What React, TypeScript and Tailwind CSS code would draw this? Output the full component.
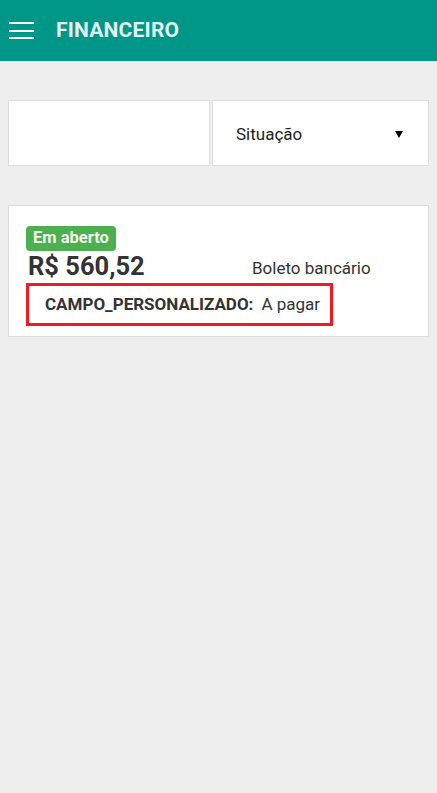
import React from "react";

export default function App() {
  return (
    <div className="min-h-[793px] w-full bg-[#eeeeee]" style={{ fontFamily: "Roboto, 'Noto Sans', sans-serif" }}>
      <header className="flex h-[61px] items-center bg-[#009688]">
        <div className="ml-[9px] flex h-[17px] w-[25px] flex-col justify-between">
          <span className="block h-[2px] w-full bg-white" />
          <span className="block h-[2px] w-full bg-white" />
          <span className="block h-[2px] w-full bg-white" />
        </div>
        <h1 className="ml-[22px] text-[21px] font-bold leading-none tracking-[0.2px] text-[#e0f2f1]">FINANCEIRO</h1>
      </header>

      <div className="mx-2 mt-[39px] flex gap-[2px]">
        <div className="h-[66px] w-[202px] border border-[#dddddd] bg-white" />
        <div className="flex h-[66px] flex-1 items-center justify-between border border-[#dddddd] bg-white pl-[23px] pr-[25px] pt-[3px]">
          <span className="text-[17px] text-[#222222]">Situação</span>
          <svg width="8" height="8" viewBox="0 0 8 8" className="mb-[2px]">
            <polygon points="0,1 8,1 4,8" fill="#000000" />
          </svg>
        </div>
      </div>

      <div className="mx-2 mt-[39px] border border-[#dddddd] bg-white pb-[10px] pl-[17px] pr-4 pt-[20px]">
        <div className="inline-flex h-[25px] items-center rounded-[4px] bg-[#4caf50] px-[7px] text-[16.5px] font-bold text-[#f1f8e9]">
          Em aberto
        </div>
        <div className="flex items-end">
          <div className="w-[226px] pl-[2px] text-[25.5px] font-bold leading-[31px] text-[#333333]">R$ 560,52</div>
          <div className="pb-[1px] text-[17px] text-[#333333]">Boleto bancário</div>
        </div>
        <div className="mt-[1px] flex h-[43px] w-[307px] items-center border-[3px] border-[#ed1c24] pl-[16px] text-[17px] text-[#333333]">
          <span className="font-bold">CAMPO_PERSONALIZADO:</span>
          <span className="ml-[8px]">A pagar</span>
        </div>
      </div>
    </div>
  );
}
